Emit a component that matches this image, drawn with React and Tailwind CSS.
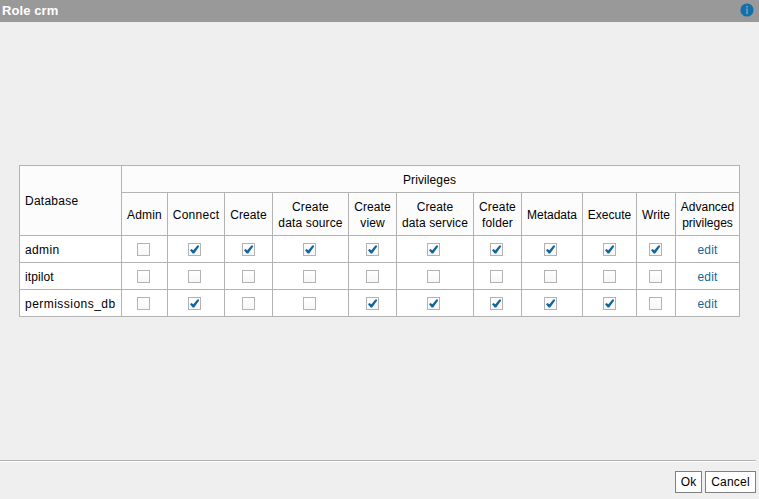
const columns = [
  { key: 'admin', lines: ['Admin'], tracking: 'tracking-[0.2px]', box: 'pr-[2px]' },
  { key: 'connect', lines: ['Connect'], tracking: 'tracking-[0.25px]', box: 'pr-[3px]' },
  { key: 'create', lines: ['Create'], tracking: 'tracking-[0.1px]', box: 'pr-0' },
  { key: 'source', lines: ['Create', 'data source'], tracking: 'tracking-[0.15px]', box: 'pr-[2px]' },
  { key: 'view', lines: ['Create', 'view'], tracking: 'tracking-[0.1px]', box: 'pr-0' },
  { key: 'service', lines: ['Create', 'data service'], tracking: 'tracking-[0.1px]', box: 'pr-[3px]' },
  { key: 'folder', lines: ['Create', 'folder'], tracking: 'tracking-[0.15px]', box: 'pr-[2px]' },
  { key: 'metadata', lines: ['Metadata'], tracking: 'tracking-normal', box: 'pr-[3px]' },
  { key: 'execute', lines: ['Execute'], tracking: 'tracking-normal', box: 'pr-0' },
  { key: 'write', lines: ['Write'], tracking: 'tracking-normal', box: 'pr-px' },
  { key: 'advanced', lines: ['Advanced', 'privileges'], tracking: 'tracking-normal', box: 'pr-0' },
];

const rows = [
  { name: 'admin', tracking: 'tracking-[0.35px]', checks: [0, 1, 1, 1, 1, 1, 1, 1, 1, 1] },
  { name: 'itpilot', tracking: 'tracking-[0.1px]', checks: [0, 0, 0, 0, 0, 0, 0, 0, 0, 0] },
  { name: 'permissions_db', tracking: 'tracking-[0.47px]', checks: [0, 1, 0, 0, 1, 1, 1, 1, 1, 0] },
];

function Checkbox({ checked }) {
  return (
    <span
      role="checkbox"
      aria-checked={checked}
      className="flex h-[13px] w-[13px] items-center justify-center border border-[#b3b3b3] bg-linear-to-b from-white to-[#f7f7f7]"
    >
      {checked && (
        <svg width="11" height="11" viewBox="0 0 11 11" fill="#13669c">
          <path d="M1 6.2 2.4 5 4.4 6.3 8.3 1.4H10V2.8L5.2 9.4H3.7Z" />
        </svg>
      )}
    </span>
  );
}

function InfoIcon() {
  return (
    <svg width="14" height="14" viewBox="0 0 14 14" className="mb-px">
      <circle cx="7" cy="7" r="6.6" fill="#1470a8" />
      <path d="M6 3h2v1.5H6zM6 5.5h2V11H6z" fill="#5f97b8" />
    </svg>
  );
}

export default function App() {
  return (
    <div className="flex h-[499px] w-[759px] flex-col overflow-hidden bg-[#efefef] font-['Liberation_Sans',Arial,sans-serif] text-[12px] leading-4 text-black">
      <header className="flex h-[22px] shrink-0 items-center justify-between bg-[#999] pr-[5px] pb-px pl-[2px]">
        <h1 className="text-[13px] font-bold tracking-[0.1px] text-white">Role crm</h1>
        <InfoIcon />
      </header>

      <main className="h-[438px] shrink-0 pt-[143px] pl-[19px]">
        <div className="grid w-[721px] grid-cols-[101px_45px_56px_47px_75px_47px_76px_47px_60px_53px_38px_63px] grid-rows-[26px_42px_26px_26px_26px] gap-px bg-[#b3b3b3] p-px">
          <div className="row-span-2 flex items-center bg-[#fcfcfc] pt-px pl-[5px] tracking-[0.25px]">Database</div>
          <div className="col-span-11 flex items-center justify-center bg-[#fcfcfc] pt-[2px] pr-[2px] tracking-[0.1px]">
            Privileges
          </div>
          {columns.map((c) => (
            <div
              key={c.key}
              className={`flex flex-col items-center justify-center bg-[#fcfcfc] pt-[2px] whitespace-nowrap ${c.tracking}`}
            >
              {c.lines.map((line) => (
                <span key={line}>{line}</span>
              ))}
            </div>
          ))}
          {rows.map((row) => (
            <div key={row.name} className="contents">
              <div className={`flex items-center bg-white pt-[2px] pl-[5px] ${row.tracking}`}>{row.name}</div>
              {row.checks.map((v, i) => (
                <div
                  key={columns[i].key}
                  className={`flex items-center justify-center bg-white pt-px ${columns[i].box}`}
                >
                  <Checkbox checked={v === 1} />
                </div>
              ))}
              <div className="flex items-center justify-center bg-white pt-[2px] tracking-[0.2px] text-[#13669c]">
                edit
              </div>
            </div>
          ))}
        </div>
      </main>

      <footer className="mr-[3px] flex flex-1 flex-col">
        <div className="h-px bg-[#b3b3b3]" />
        <div className="h-px bg-white" />
        <div className="mt-[9px] flex justify-end gap-[3px]">
          <button className="h-[22px] w-[27px] border border-[#808080] bg-white">Ok</button>
          <button className="h-[22px] w-[51px] border border-[#808080] bg-white tracking-[0.2px]">Cancel</button>
        </div>
      </footer>
    </div>
  );
}
